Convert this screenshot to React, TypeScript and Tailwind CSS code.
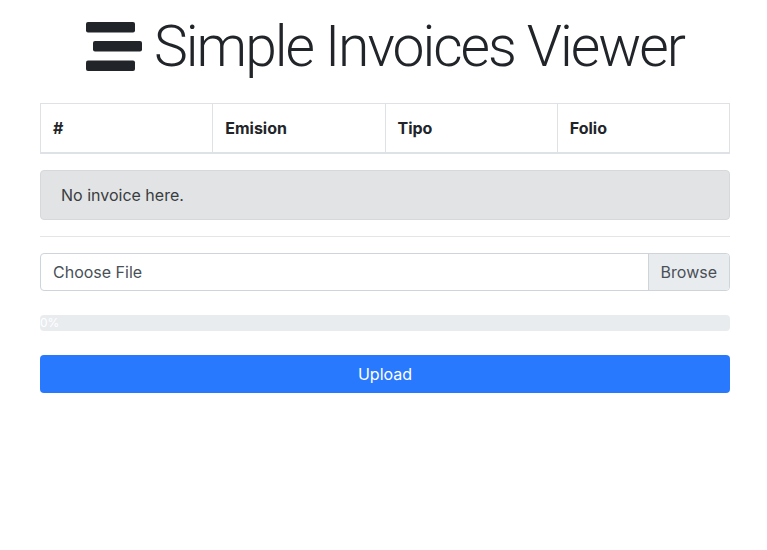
import React from "react";

export default function App() {
  const font = { fontFamily: "Inter, 'Liberation Sans', sans-serif" };
  return (
    <div className="min-h-[550px] bg-white text-[#212529]" style={font}>
      <div className="ml-[40px] w-[690px] pt-[14px]">
        <h1 className="flex h-[67px] items-center justify-center gap-[12px] mb-[22px]">
          <svg width="56" height="50" viewBox="0 0 56 50" className="shrink-0 -mt-[2px]">
            <rect x="0" y="0" width="49" height="10.5" rx="2" fill="#212529" />
            <rect x="7" y="19" width="49" height="10.5" rx="2" fill="#212529" />
            <rect x="0" y="38.5" width="49" height="10.5" rx="2" fill="#212529" />
          </svg>
          <span className="text-[57px] font-light leading-[1.2] tracking-[-2px] text-[#212529] font-['Roboto',sans-serif]">
            Simple Invoices Viewer
          </span>
        </h1>

        <table className="w-full border-collapse border border-[#dee2e6] mb-[16px] table-fixed">
          <thead>
            <tr>
              {["#", "Emision", "Tipo", "Folio"].map((h) => (
                <th
                  key={h}
                  className="border border-[#dee2e6] border-b-2 px-[12px] py-[12px] text-left text-[16px] font-bold leading-[24px]"
                >
                  {h}
                </th>
              ))}
            </tr>
          </thead>
        </table>

        <div className="rounded-[4px] border border-[#d6d8db] bg-[#e2e3e5] px-[20px] py-[12px] text-[16px] leading-[24px] text-[#383d41] mb-[16px]">
          No invoice here.
        </div>

        <hr className="border-0 border-t border-[rgba(0,0,0,0.1)] mb-[16px]" />

        <div className="flex h-[38px] rounded-[4px] border border-[#ced4da] overflow-hidden mb-[24px]">
          <div className="flex-1 px-[12px] flex items-center text-[16px] text-[#495057]">Choose File</div>
          <div className="flex items-center border-l border-[#ced4da] bg-[#e9ecef] px-[12px] text-[16px] text-[#495057]">
            Browse
          </div>
        </div>

        <div className="h-[16px] rounded-[4px] bg-[#e9ecef] mb-[24px] flex items-center overflow-hidden">
          <span className="text-[12px] leading-[16px] text-white">0%</span>
        </div>

        <button className="h-[38px] w-full rounded-[4px] bg-[#2979ff] text-[16px] text-white">
          Upload
        </button>
      </div>
    </div>
  );
}
